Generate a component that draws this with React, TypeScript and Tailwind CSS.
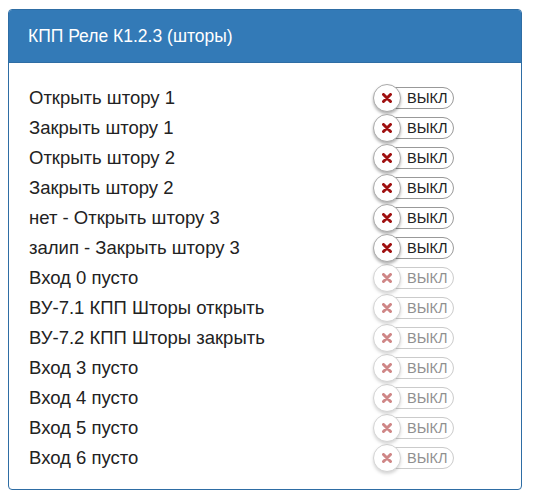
import React from "react";

const rows: { label: string; active: boolean }[] = [
  { label: "Открыть штору 1", active: true },
  { label: "Закрыть штору 1", active: true },
  { label: "Открыть штору 2", active: true },
  { label: "Закрыть штору 2", active: true },
  { label: "нет - Открыть штору 3", active: true },
  { label: "залип - Закрыть штору 3", active: true },
  { label: "Вход 0 пусто", active: false },
  { label: "ВУ-7.1 КПП Шторы открыть", active: false },
  { label: "ВУ-7.2 КПП Шторы закрыть", active: false },
  { label: "Вход 3 пусто", active: false },
  { label: "Вход 4 пусто", active: false },
  { label: "Вход 5 пусто", active: false },
  { label: "Вход 6 пусто", active: false },
];

function Toggle({ active }: { active: boolean }) {
  return (
    <div className={"relative flex items-center h-[28px] w-[84px] " + (active ? "" : "opacity-50")}>
      <div className="absolute left-[2px] top-[3px] h-[22px] w-[79px] rounded-full border border-[#999] bg-white" />
      <div className="relative z-10 flex items-center justify-center h-[28px] w-[28px] rounded-full border border-[#aaa] bg-white shadow-[0_2px_3px_rgba(0,0,0,0.3)]">
        <svg width="10" height="10" viewBox="0 0 10 10">
          <path d="M1.5 1.5 L8.5 8.5 M8.5 1.5 L1.5 8.5" stroke="#a01010" strokeWidth="3" strokeLinecap="round" />
        </svg>
      </div>
      <span className="relative z-10 ml-[6px] text-[14.5px] leading-none text-[#222]">ВЫКЛ</span>
    </div>
  );
}

export default function App() {
  return (
    <div className="bg-white w-[542px] h-[500px] pt-[9px] pl-[8px]" style={{ fontFamily: '"Liberation Sans", Arial, sans-serif' }}>
      <div className="w-[514px] rounded-[4px] border border-[#2e6da4] bg-white overflow-hidden">
        <div className="h-[53px] bg-[#337ab7] border-b border-[#2e6da4] flex items-center pl-[19px] text-white text-[17.5px]">
          КПП Реле К1.2.3 (шторы)
        </div>
        <div className="pt-[20px] pb-[16px] pl-[20px]">
          {rows.map((r, i) => (
            <div key={i} className="flex items-center h-[30px]">
              <div className="w-[344px] text-[18.5px] text-[#222]">{r.label}</div>
              <Toggle active={r.active} />
            </div>
          ))}
        </div>
      </div>
    </div>
  );
}
